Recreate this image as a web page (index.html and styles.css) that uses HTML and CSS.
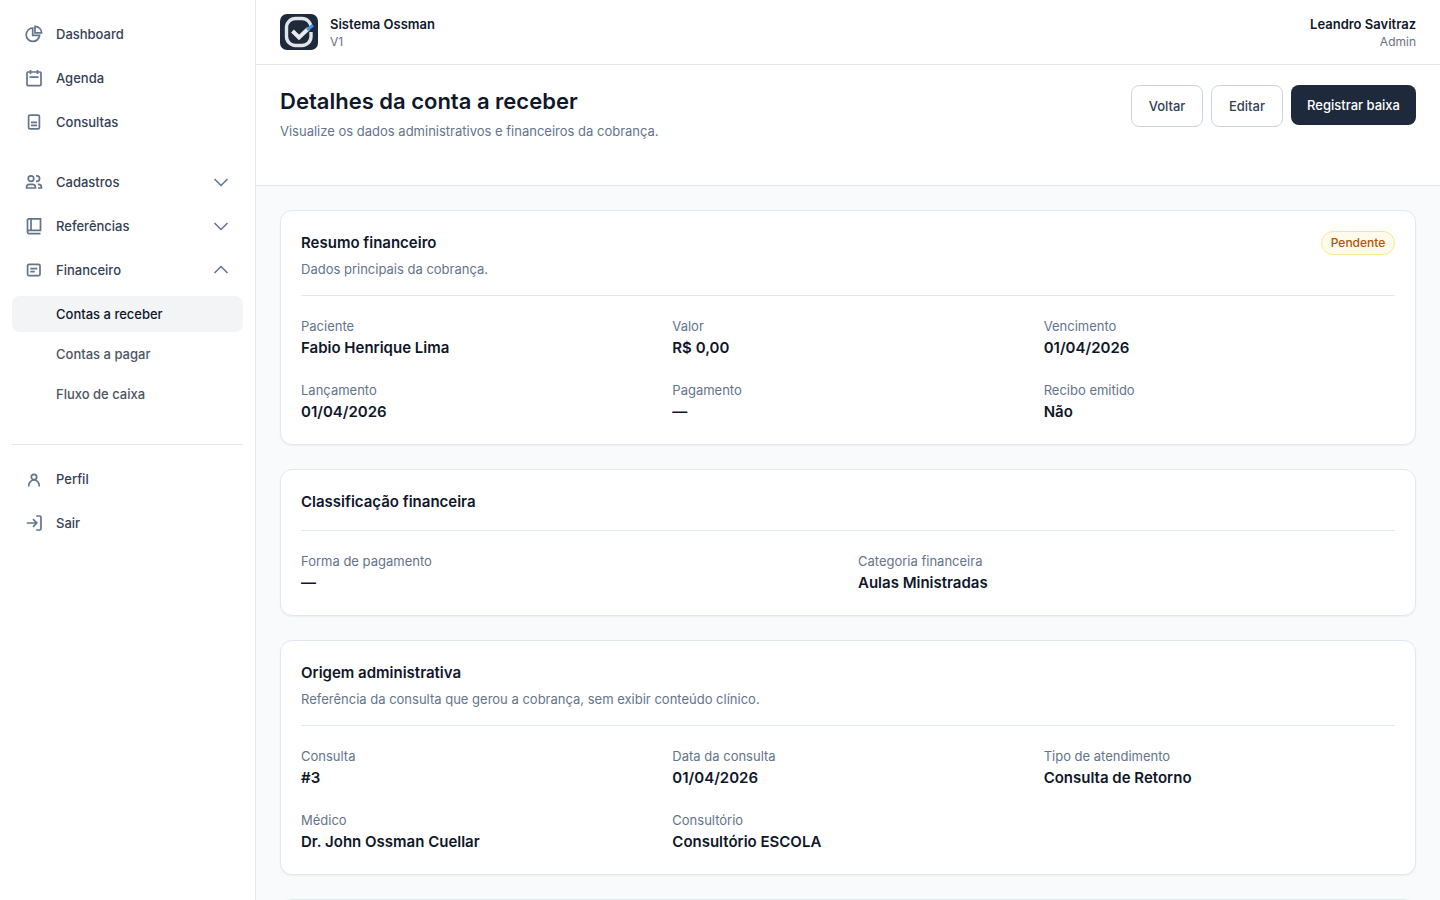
FILE: index.html
```html
<!DOCTYPE html>
<html lang="pt-BR">
<head>
<meta charset="utf-8">
<meta name="viewport" content="width=device-width, initial-scale=1">
<title>Detalhes da conta a receber</title>
<link rel="stylesheet" href="styles.css">
</head>
<body>
<div class="app">
  <nav class="sidebar" aria-label="Principal">
    <div class="nav-group">
      <a class="nav-item" href="#"><svg class="icon" viewBox="0 0 20 20"><path d="M8.700 4A6.700 6.700 0 1 0 15.600 11.300H8.700Z"/><path d="M11 2.300V8.900h6.600A6.600 6.600 0 0 0 11 2.300Z"/></svg>Dashboard</a>
      <a class="nav-item" href="#"><svg class="icon" viewBox="0 0 20 20"><rect x="3" y="4" width="14" height="13.600" rx="1"/><path d="M6.500 2v4M13.500 2v4M5.500 9.200h9"/></svg>Agenda</a>
      <a class="nav-item" href="#"><svg class="icon" viewBox="0 0 20 20"><rect x="4.600" y="3.100" width="10.800" height="13.800" rx="1.500"/><path d="M7 10.400h6M7 13.400h6"/></svg>Consultas</a>
    </div>
    <div class="nav-group">
      <button class="nav-item" type="button" aria-expanded="false"><svg class="icon" viewBox="0 0 20 20"><circle cx="7" cy="6.600" r="2.800"/><path d="M2.600 16v-.9a2.800 2.800 0 0 1 2.800-2.800h3.200a2.800 2.800 0 0 1 2.800 2.800v.9ZM12 3.800h.8a2.800 2.800 0 0 1 0 5.600H12M13.800 12.300h.8a2.800 2.800 0 0 1 2.800 2.800v.9h-3.400"/></svg><span class="nav-label">Cadastros</span><svg class="icon chevron" viewBox="0 0 20 20"><path d="m3.500 7 6.500 6.500L16.500 7"/></svg></button>
      <button class="nav-item" type="button" aria-expanded="false"><svg class="icon" viewBox="0 0 20 20"><path d="M16.500 17.600H5a1.500 1.500 0 0 1-1.500-1.500V4c0-.7.500-1.200 1.200-1.200h11.800v11.600H5a1.500 1.500 0 0 0-1.500 1.500M7 2.800v11.600"/></svg><span class="nav-label">Referências</span><svg class="icon chevron" viewBox="0 0 20 20"><path d="m3.500 7 6.500 6.500L16.500 7"/></svg></button>
      <button class="nav-item" type="button" aria-expanded="true"><svg class="icon" viewBox="0 0 20 20"><rect x="3.600" y="4.300" width="12.400" height="11.400" rx="1.500"/><path d="M6.300 8.600h7M6.300 11.600h4.400"/></svg><span class="nav-label">Financeiro</span><svg class="icon chevron" viewBox="0 0 20 20"><path d="M3.500 13 10 6.500l6.500 6.500"/></svg></button>
      <div class="subnav">
        <a class="sub-item sub-item-active" href="#" aria-current="page">Contas a receber</a>
        <a class="sub-item" href="#">Contas a pagar</a>
        <a class="sub-item" href="#">Fluxo de caixa</a>
      </div>
    </div>
    <div class="nav-group nav-account">
      <a class="nav-item" href="#"><svg class="icon" viewBox="0 0 20 20"><circle cx="10" cy="8" r="2.700"/><path d="M4.800 17.400v-1.200a5.200 5.200 0 0 1 10.400 0v1.200"/></svg>Perfil</a>
      <a class="nav-item" href="#"><svg class="icon" viewBox="0 0 20 20"><path d="M2.800 10h10M9 6.200l3.800 3.800L9 13.800M12.200 3h3.400c.9 0 1.400.5 1.400 1.400v11.200c0 .9-.5 1.400-1.400 1.400h-3.400"/></svg>Sair</a>
    </div>
  </nav>

  <div class="content">
    <header class="topbar">
      <div class="brand">
        <svg class="logo" viewBox="0 0 38 36" aria-hidden="true"><rect width="38" height="36" rx="7" fill="#1e293b"/><rect x="6.500" y="4.500" width="24.500" height="27" rx="9" fill="none" stroke="#e2e4e8" stroke-width="3.400"/><path d="m24 18 9-8v8Z" fill="#1e293b"/><path d="m12.500 17 6.500 6.500 9.500-9" fill="none" stroke="#e8eaed" stroke-width="4"/><path d="m27 15.800 6-4.600" stroke="#4b93ea" stroke-width="3"/></svg>
        <div><div class="strong-name">Sistema Ossman</div><div class="caption">V1</div></div>
      </div>
      <div class="user"><div class="strong-name">Leandro Savitraz</div><div class="caption">Admin</div></div>
    </header>

    <div class="page-header">
      <div>
        <h1 class="page-title">Detalhes da conta a receber</h1>
        <p class="subtitle">Visualize os dados administrativos e financeiros da cobrança.</p>
      </div>
      <div class="actions">
        <button class="button button-outline" type="button">Voltar</button>
        <button class="button button-outline" type="button">Editar</button>
        <button class="button button-primary" type="button">Registrar baixa</button>
      </div>
    </div>

    <main class="cards">
      <section class="card">
        <div class="card-header">
          <div><h2 class="card-title">Resumo financeiro</h2><p class="subtitle">Dados principais da cobrança.</p></div>
          <span class="badge">Pendente</span>
        </div>
        <dl class="fields">
          <div><dt>Paciente</dt><dd>Fabio Henrique Lima</dd></div>
          <div><dt>Valor</dt><dd>R$ 0,00</dd></div>
          <div><dt>Vencimento</dt><dd>01/04/2026</dd></div>
          <div><dt>Lançamento</dt><dd>01/04/2026</dd></div>
          <div><dt>Pagamento</dt><dd>—</dd></div>
          <div><dt>Recibo emitido</dt><dd>Não</dd></div>
        </dl>
      </section>
      <section class="card">
        <div class="card-header"><h2 class="card-title">Classificação financeira</h2></div>
        <dl class="fields fields-two">
          <div><dt>Forma de pagamento</dt><dd>—</dd></div>
          <div><dt>Categoria financeira</dt><dd>Aulas Ministradas</dd></div>
        </dl>
      </section>
      <section class="card">
        <div class="card-header">
          <div><h2 class="card-title">Origem administrativa</h2><p class="subtitle">Referência da consulta que gerou a cobrança, sem exibir conteúdo clínico.</p></div>
        </div>
        <dl class="fields">
          <div><dt>Consulta</dt><dd>#3</dd></div>
          <div><dt>Data da consulta</dt><dd>01/04/2026</dd></div>
          <div><dt>Tipo de atendimento</dt><dd>Consulta de Retorno</dd></div>
          <div><dt>Médico</dt><dd>Dr. John Ossman Cuellar</dd></div>
          <div><dt>Consultório</dt><dd>Consultório ESCOLA</dd></div>
        </dl>
      </section>
      <section class="card"></section>
    </main>
  </div>
</div>
</body>
</html>
```
FILE: styles.css
```css
* { box-sizing: border-box; }
body, h1, h2, p, dl, dd { margin: 0; }
body {
  font-family: Inter, "Open Sans", sans-serif;
  font-size: 13px;
  line-height: 20px;
  color: #0f172a;
  background: #f8fafc;
}
button { font: inherit; cursor: pointer; }
a { color: inherit; text-decoration: none; }

.app { display: flex; height: 100vh; }

.sidebar {
  flex: 0 0 256px;
  padding: 12px;
  background: #fff;
  border-right: 1px solid #e5e7eb;
}
.nav-group + .nav-group { margin-top: 16px; }
.nav-item {
  display: flex;
  align-items: center;
  gap: 12px;
  width: 100%;
  padding: 12px;
  border: 0;
  border-radius: 8px;
  background: none;
  color: #334155;
  font-weight: 500;
  text-align: left;
}
.nav-label { flex: 1; }
.icon {
  flex: none;
  width: 20px;
  height: 20px;
  fill: none;
  stroke: #64748b;
  stroke-width: 1.7;
}
.chevron { stroke-width: 1.5; }
.subnav {
  display: flex;
  flex-direction: column;
  gap: 4px;
  padding-top: 4px;
}
.sub-item {
  padding: 8px 12px 8px 44px;
  border-radius: 8px;
  color: #4b5563;
  font-weight: 500;
}
.sub-item-active { background: #f3f4f6; color: #0f172a; }
.nav-group + .nav-account {
  margin-top: 32px;
  padding-top: 12px;
  border-top: 1px solid #e5e7eb;
}

.content {
  flex: 1;
  min-width: 0;
  overflow-y: auto;
  scrollbar-width: none;
}
.topbar {
  display: flex;
  justify-content: space-between;
  padding: 14px 24px;
  background: #fff;
  border-bottom: 1px solid #e5e7eb;
}
.brand { display: flex; gap: 12px; }
.logo { width: 38px; height: 36px; }
.strong-name { font-weight: 600; }
.caption { font-size: 12px; line-height: 16px; color: #6b7280; }
.user { text-align: right; }

.page-header {
  display: flex;
  justify-content: space-between;
  gap: 24px;
  padding: 20px 24px 44px;
  background: #fff;
  border-bottom: 1px solid #e5e7eb;
}
.page-title { font-size: 22px; line-height: 32px; font-weight: 600; }
.subtitle { margin-top: 4px; color: #64748b; }
.actions { display: flex; align-items: flex-start; gap: 8px; }
.button {
  min-width: 72px;
  padding: 10px 12px;
  border: 0;
  border-radius: 8px;
  font-weight: 500;
  white-space: nowrap;
}
.button-outline { border: 1px solid #cbd5e1; background: #fff; color: #334155; }
.button-primary { min-width: 125px; background: #1e293b; color: #fff; }

.cards { display: grid; gap: 24px; padding: 24px; }
.card {
  padding: 20px;
  background: #fff;
  border: 1px solid #e2e8f0;
  border-radius: 12px;
  box-shadow: 0 1px 2px rgba(0, 0, 0, 0.05);
}
.card-header {
  display: flex;
  justify-content: space-between;
  align-items: flex-start;
  padding-bottom: 16px;
  border-bottom: 1px solid #e2e8f0;
}
.card-title { font-size: 15px; line-height: 24px; font-weight: 600; }
.badge {
  min-width: 74px;
  padding: 3px 8px;
  border: 1px solid #fde68a;
  border-radius: 12px;
  background: #fffbeb;
  color: #b45309;
  font-size: 12px;
  line-height: 16px;
  font-weight: 500;
  text-align: center;
}
.fields {
  display: grid;
  grid-template-columns: repeat(3, 1fr);
  gap: 20px;
  padding-top: 20px;
}
.fields-two { grid-template-columns: repeat(2, 1fr); }
.fields dt { color: #64748b; }
.fields dd { font-size: 15px; line-height: 24px; font-weight: 600; }
```
